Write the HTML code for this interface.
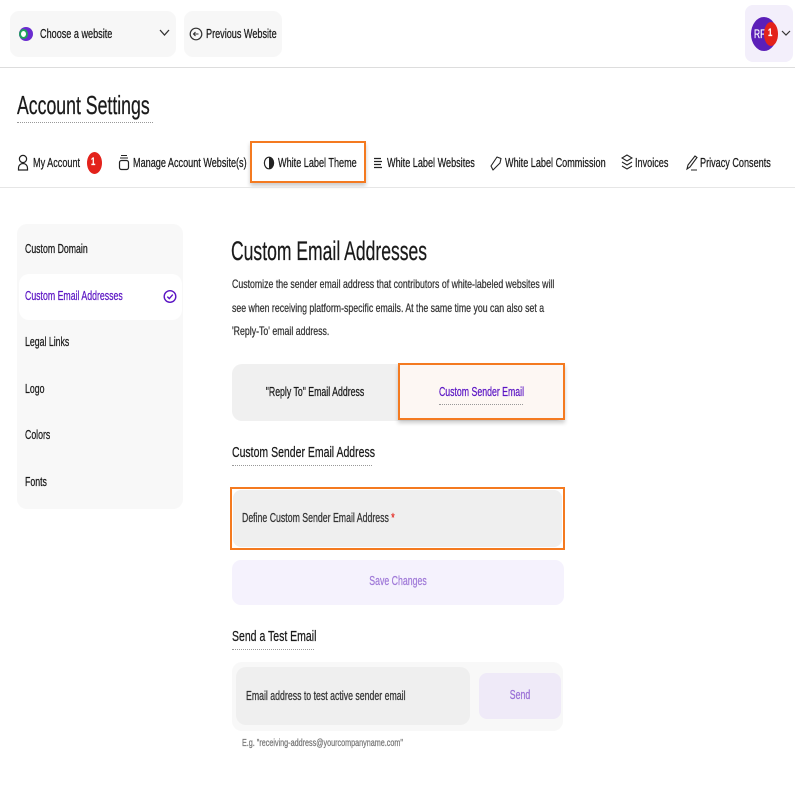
<!DOCTYPE html>
<html><head><meta charset="utf-8"><style>
*{box-sizing:border-box;margin:0;padding:0}
body{width:795px;height:795px;background:#fff;font-family:"Liberation Sans",sans-serif;color:#1a1a1a;position:relative;overflow:hidden}
.a{position:absolute}
.t{position:absolute;white-space:nowrap;transform:scaleX(.7);transform-origin:0 50%;-webkit-text-stroke:.25px currentColor}
.c{transform-origin:50% 50%}
svg{position:absolute}
</style></head><body>
<!-- top bar -->
<div class="a" style="left:10px;top:11px;width:166px;height:46px;background:#f7f7f7;border-radius:9px"></div>
<div class="a" style="left:19px;top:27px;width:14px;height:14px;border-radius:50%;background:#6a2bd0"></div>
<div class="a" style="left:19px;top:29px;width:9px;height:10px;border-radius:50%;border:2px solid #1fa35a;background:#fff"></div>
<div class="t" style="left:40px;top:26px;font-size:13px">Choose a website</div>
<svg style="left:159px;top:29px" width="11" height="8"><path d="M1 1l4.5 5L10 1" stroke="#333" stroke-width="1.3" fill="none"/></svg>
<div class="a" style="left:184px;top:11px;width:98px;height:46px;background:#f7f7f7;border-radius:9px"></div>
<svg style="left:189px;top:27px" width="14" height="14"><circle cx="7" cy="7" r="5.8" stroke="#333" stroke-width="1.2" fill="none"/><path d="M9.5 7H4.5M6.5 5L4.5 7l2 2" stroke="#333" stroke-width="1.1" fill="none"/></svg>
<div class="t" style="left:206px;top:26px;font-size:13px">Previous Website</div>
<div class="a" style="left:745px;top:5px;width:48px;height:57px;background:#f3effb;border-radius:8px"></div>
<div class="a" style="left:751px;top:17px;width:26px;height:34px;border-radius:50%;background:#5b1fb8"></div>
<div class="t" style="left:754px;top:27px;font-size:12px;color:#fff">RF</div>
<div class="a" style="left:764px;top:22px;width:14px;height:24px;border-radius:50%;background:#e3221b"></div>
<div class="t" style="left:768px;top:27px;font-size:11px;color:#fff;font-weight:bold">1</div>
<svg style="left:781px;top:30px" width="10" height="7"><path d="M1 1l4 4 4-4" stroke="#333" stroke-width="1.2" fill="none"/></svg>
<div class="a" style="left:0;top:67px;width:795px;height:1px;background:#ddd"></div>

<div class="t" style="left:17px;top:90px;font-size:26px;transform:scaleX(.68)">Account Settings</div>
<div class="a" style="left:17px;top:122px;width:136px;border-top:1px dotted #999"></div>

<!-- tabs -->
<svg style="left:17px;top:154px" width="12" height="17"><circle cx="6" cy="5" r="3.6" stroke="#222" stroke-width="1.2" fill="none"/><path d="M1.5 16v-2a4.5 4.5 0 019 0v2z" stroke="#222" stroke-width="1.2" fill="none"/></svg>
<div class="t" style="left:33px;top:155px;font-size:13px">My Account</div>
<div class="a" style="left:87px;top:152px;width:15px;height:22px;border-radius:50%;background:#e3221b"></div>
<div class="t" style="left:91px;top:156px;font-size:11px;color:#fff;font-weight:bold">1</div>
<svg style="left:118px;top:154px" width="12" height="17"><path d="M3 1.5h6M2 4h8" stroke="#222" stroke-width="1.1"/><rect x="1.5" y="6.5" width="9" height="9" rx="2" stroke="#222" stroke-width="1.2" fill="none"/></svg>
<div class="t" style="left:133px;top:155px;font-size:13px">Manage Account Website(s)</div>
<div class="a" style="left:250px;top:141px;width:116px;height:42px;border:2px solid #f47a20;box-shadow:0 3px 4px rgba(0,0,0,.2)"></div>
<svg style="left:263px;top:156px" width="12" height="14"><ellipse cx="6" cy="7" rx="4.6" ry="5.8" stroke="#222" stroke-width="1.2" fill="none"/><path d="M6 1.2a4.6 5.8 0 010 11.6z" fill="#222"/></svg>
<div class="t" style="left:278px;top:155px;font-size:13px">White Label Theme</div>
<svg style="left:373px;top:157px" width="10" height="12"><path d="M1 1.5h7M1 4.5h8M1 7.5h7M1 10.5h8" stroke="#222" stroke-width="1.2"/></svg>
<div class="t" style="left:387px;top:155px;font-size:13px">White Label Websites</div>
<svg style="left:490px;top:155px" width="12" height="17"><path d="M3 15L1 11 7 2l4 1.5L10 8z" stroke="#222" stroke-width="1.1" fill="none" stroke-linejoin="round"/></svg>
<div class="t" style="left:505px;top:155px;font-size:13px">White Label Commission</div>
<svg style="left:621px;top:154px" width="12" height="17"><path d="M6 1L1 4l5 3 5-3zM1 8l5 3 5-3M1 12l5 3 5-3" stroke="#222" stroke-width="1.1" fill="none"/></svg>
<div class="t" style="left:635px;top:155px;font-size:13px">Invoices</div>
<svg style="left:685px;top:154px" width="13" height="18"><path d="M2 15l1-4 7-9 2 1.5-7 9.5zM6 16h6" stroke="#222" stroke-width="1.1" fill="none"/></svg>
<div class="t" style="left:700px;top:155px;font-size:13px">Privacy Consents</div>
<div class="a" style="left:0;top:187px;width:795px;height:1px;background:#e6e6e6"></div>

<!-- sidebar -->
<div class="a" style="left:17px;top:224px;width:166px;height:285px;background:#f8f8f8;border-radius:10px"></div>
<div class="a" style="left:19px;top:274px;width:163px;height:46px;background:#fff;border-radius:10px"></div>
<div class="t" style="left:25px;top:242px;font-size:12.5px">Custom Domain</div>
<div class="t" style="left:25px;top:289px;font-size:12.5px;color:#5b15c4">Custom Email Addresses</div>
<svg style="left:163px;top:289px" width="14" height="15"><circle cx="7" cy="7.5" r="5.8" stroke="#5b15c4" stroke-width="1.4" fill="none"/><path d="M4.3 7.6l2 2 3.5-4" stroke="#5b15c4" stroke-width="1.4" fill="none"/></svg>
<div class="t" style="left:25px;top:335px;font-size:12.5px">Legal Links</div>
<div class="t" style="left:25px;top:382px;font-size:12.5px">Logo</div>
<div class="t" style="left:25px;top:428px;font-size:12.5px">Colors</div>
<div class="t" style="left:25px;top:475px;font-size:12.5px">Fonts</div>

<!-- main -->
<div class="t" style="left:231px;top:236px;font-size:27px;transform:scaleX(.65)">Custom Email Addresses</div>
<div class="t" style="left:232px;top:273px;font-size:12px;color:#333;line-height:23.5px;transform:scaleX(.73)">Customize the sender email address that contributors of white-labeled websites will<br>see when receiving platform-specific emails. At the same time you can also set a<br>'Reply-To' email address.</div>

<div class="a" style="left:232px;top:364px;width:333px;height:57px;background:#f0f0f0;border-radius:10px"></div>
<div class="t c" style="left:232px;top:385px;width:166px;text-align:center;font-size:12.5px">"Reply To" Email Address</div>
<div class="a" style="left:398px;top:363px;width:167px;height:57px;background:#fdf7f3;border:2px solid #f47a20;box-shadow:0 3px 4px rgba(0,0,0,.2)"></div>
<div class="t c" style="left:398px;top:385px;width:167px;text-align:center;font-size:12.5px;color:#5b15c4">Custom Sender Email</div>
<div class="a" style="left:439px;top:404px;width:84px;border-top:1px dotted #999"></div>

<div class="t" style="left:232px;top:444px;font-size:15px">Custom Sender Email Address</div>
<div class="a" style="left:232px;top:465px;width:140px;border-top:1px dotted #999"></div>

<div class="a" style="left:230px;top:487px;width:335px;height:63px;border:2px solid #f47a20;background:#fff"></div>
<div class="a" style="left:233px;top:490px;width:329px;height:57px;background:#efefef;border-radius:8px"></div>
<div class="t" style="left:242px;top:511px;font-size:12.5px;color:#333">Define Custom Sender Email Address <span style="color:#e3221b">*</span></div>

<div class="a" style="left:232px;top:560px;width:332px;height:45px;background:#f5f2fd;border-radius:9px"></div>
<div class="t c" style="left:232px;top:574px;width:332px;text-align:center;font-size:12.5px;color:#a07ad8">Save Changes</div>

<div class="t" style="left:232px;top:628px;font-size:15px">Send a Test Email</div>
<div class="a" style="left:232px;top:649px;width:82px;border-top:1px dotted #999"></div>

<div class="a" style="left:232px;top:662px;width:331px;height:69px;background:#f8f8f8;border-radius:10px"></div>
<div class="a" style="left:236px;top:667px;width:234px;height:58px;background:#efefef;border-radius:10px"></div>
<div class="t" style="left:246px;top:689px;font-size:12.5px;color:#333">Email address to test active sender email</div>
<div class="a" style="left:479px;top:673px;width:82px;height:46px;background:#efeaf8;border-radius:8px"></div>
<div class="t c" style="left:479px;top:688px;width:82px;text-align:center;font-size:12.5px;color:#9a6fd6">Send</div>
<div class="t" style="left:242px;top:738px;font-size:10px;color:#777;transform:scaleX(.72)">E.g. "receiving-address@yourcompanyname.com"</div>
</body></html>
